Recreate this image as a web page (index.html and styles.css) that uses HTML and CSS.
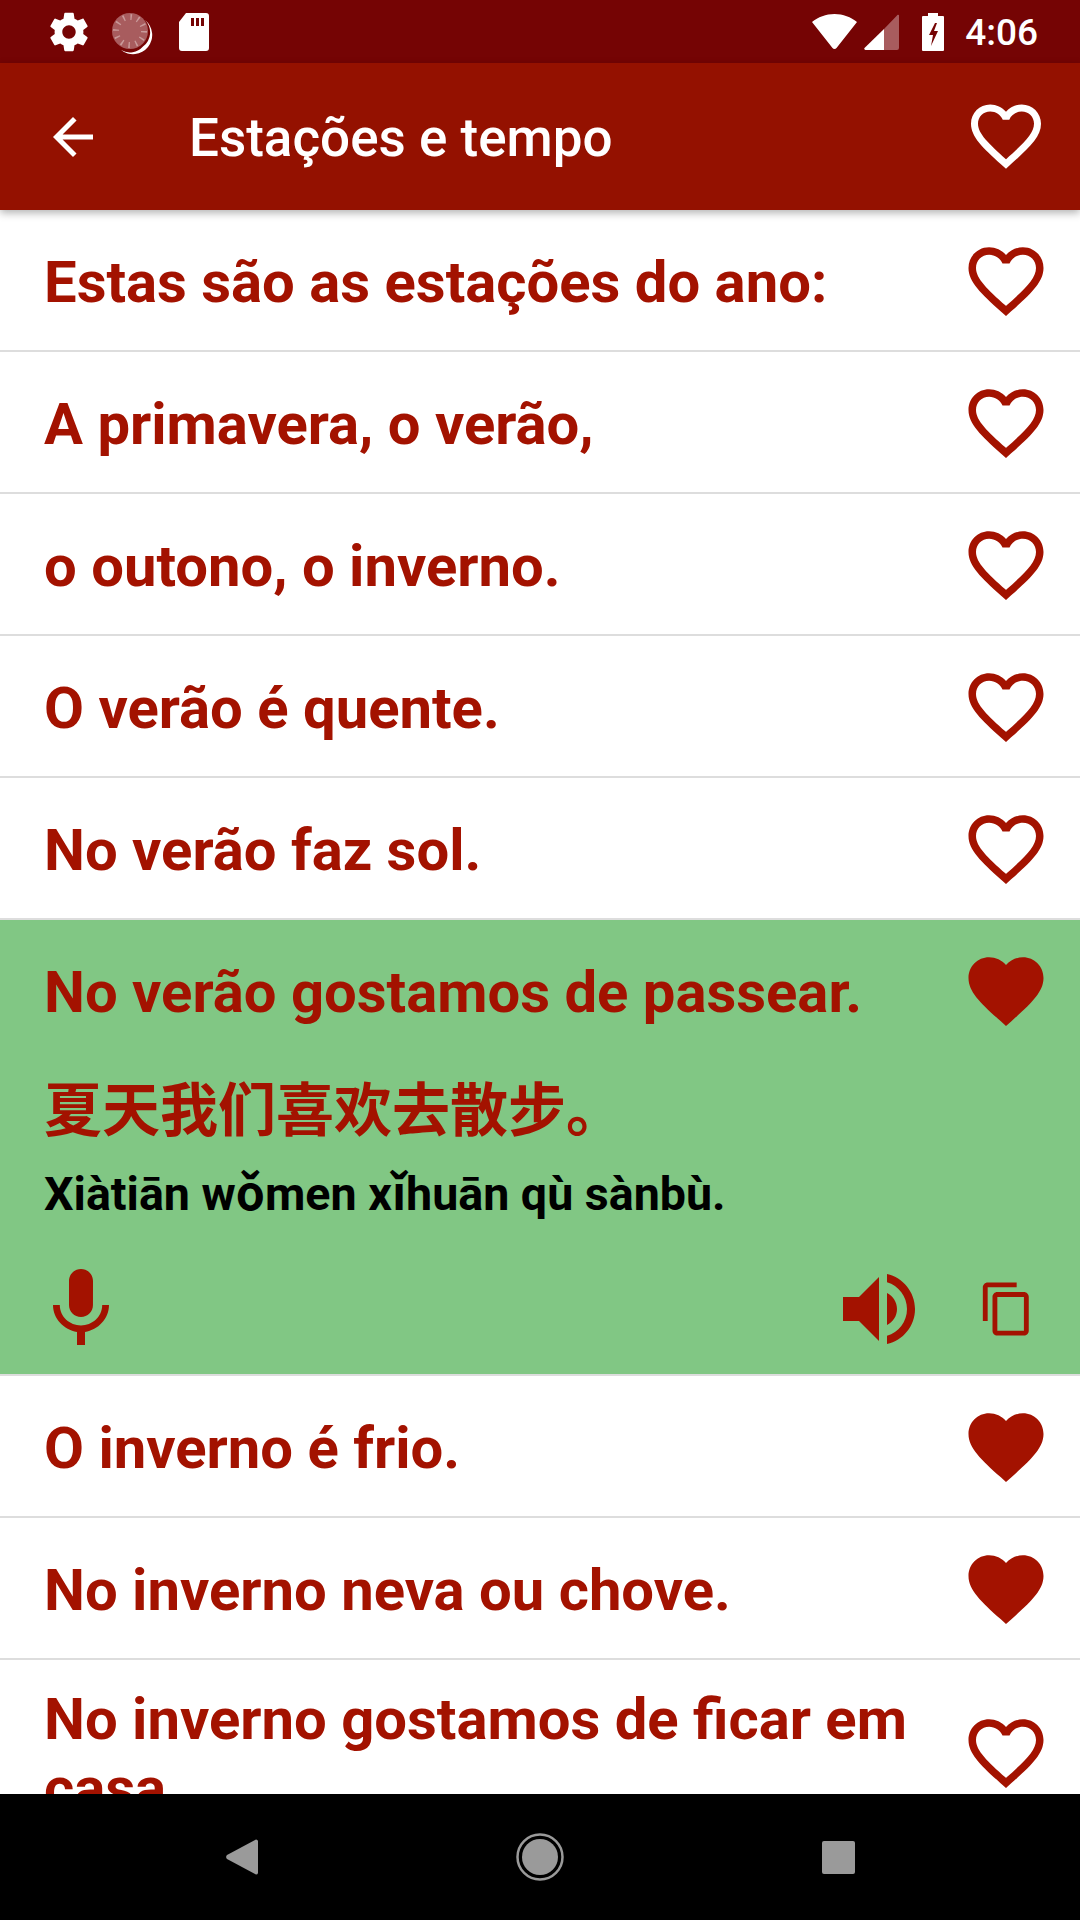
FILE: index.html
```html
<!DOCTYPE html>
<html lang="pt">
<head>
  <meta charset="UTF-8">
  <title>Estações e tempo</title>
  <link rel="stylesheet" href="styles.css">
</head>
<body>

  <svg class="defs" width="0" height="0">
    <symbol id="heart-line" viewBox="0 0 24 24"><path d="M16.5 3c-1.74 0-3.41.81-4.5 2.09C10.91 3.81 9.24 3 7.5 3 4.42 3 2 5.42 2 8.5c0 3.78 3.4 6.86 8.55 11.54L12 21.35l1.45-1.32C18.6 15.36 22 12.28 22 8.5 22 5.42 19.58 3 16.5 3zm-4.4 15.55l-.1.1-.1-.1C7.14 14.24 4 11.39 4 8.5 4 6.5 5.5 5 7.5 5c1.54 0 3.04.99 3.57 2.36h1.87C13.46 5.99 14.96 5 16.5 5c2 0 3.5 1.5 3.5 3.5 0 2.89-3.14 5.74-7.9 10.05z"/></symbol>
    <symbol id="heart-full" viewBox="0 0 24 24"><path d="M12 21.35l-1.45-1.32C5.4 15.36 2 12.28 2 8.5 2 5.42 4.42 3 7.5 3c1.74 0 3.41.81 4.5 2.09C13.09 3.81 14.76 3 16.5 3 19.58 3 22 5.42 22 8.5c0 3.78-3.4 6.86-8.55 11.54L12 21.35z"/></symbol>
  </svg>

  <div class="app">

    <div class="status-bar">
      <div class="status-left">
        <svg class="ic-status" viewBox="0 0 24 24"><path d="M19.43 12.98c.04-.32.07-.64.07-.98s-.03-.66-.07-.98l2.11-1.65c.19-.15.24-.42.12-.64l-2-3.46c-.12-.22-.39-.3-.61-.22l-2.49 1c-.52-.4-1.08-.73-1.69-.98l-.38-2.65C14.46 2.18 14.25 2 14 2h-4c-.25 0-.46.18-.49.42l-.38 2.65c-.61.25-1.17.59-1.69.98l-2.49-1c-.23-.09-.49 0-.61.22l-2 3.46c-.13.22-.07.49.12.64l2.11 1.65c-.04.32-.07.65-.07.98s.03.66.07.98l-2.11 1.65c-.19.15-.24.42-.12.64l2 3.46c.12.22.39.3.61.22l2.49-1c.52.4 1.08.73 1.69.98l.38 2.65c.03.24.24.42.49.42h4c.25 0 .46-.18.49-.42l.38-2.65c.61-.25 1.17-.59 1.69-.98l2.49 1c.23.09.49 0 .61-.22l2-3.46c.12-.22.07-.49-.12-.64l-2.11-1.65zM12 15.5c-1.93 0-3.5-1.57-3.5-3.5s1.57-3.5 3.5-3.5 3.5 1.57 3.5 3.5-1.57 3.5-3.5 3.5z"/></svg>
        <svg class="ic-status" viewBox="0 0 46 46">
          <circle class="dial" cx="22" cy="22" r="18"/>
          <circle class="dial-ticks" cx="22" cy="22" r="14"/>
          <path d="M37 11a19 19 0 0 1-24 30a17.500 17.500 0 0 0 22-3.500a17.500 17.500 0 0 0 2-26.500z"/>
        </svg>
        <svg class="ic-status" viewBox="0 0 46 46"><path fill-rule="evenodd" d="M16 4h20a3 3 0 0 1 3 3v32a3 3 0 0 1-3 3H12a3 3 0 0 1-3-3V13zM21 9v8h3V9zM26 9v8h3V9zM31 9v8h3V9z"/></svg>
      </div>
      <div class="status-right">
        <svg class="ic-wifi" viewBox="0 0 45 36"><path d="M22.500 0C14 0 6 3 0 8l20.500 26a2.500 2.500 0 0 0 4 0L45 8C39 3 31 0 22.500 0z"/></svg>
        <svg class="ic-signal" viewBox="0 0 35 36">
          <path class="dim" d="M20 15L33 1.500a1 1 0 0 1 2 .5v32a2 2 0 0 1-2 2H20z"/>
          <path d="M20 15V36H1.500a1.300 1.300 0 0 1-1-2z"/>
        </svg>
        <svg class="ic-battery" viewBox="0 0 22 38"><path fill-rule="evenodd" d="M6 0h10v3h5a1 1 0 0 1 1 1v33a1 1 0 0 1-1 1H1a1 1 0 0 1-1-1V4a1 1 0 0 1 1-1h5zM13 10L7 22h4l-2 11 7-15h-4l3-8z"/></svg>
        <span class="clock">4:06</span>
      </div>
    </div>

    <header class="toolbar">
      <svg class="ic-back" viewBox="0 0 24 24"><path d="M20 11H7.830l5.590-5.590L12 4l-8 8 8 8 1.410-1.410L7.830 13H20v-2z"/></svg>
      <h1 class="title">Estações e tempo</h1>
      <svg class="ic-fav"><use href="#heart-line"/></svg>
    </header>

    <ul class="list">
      <li class="row"><div class="row-head"><span class="phrase">Estas são as estações do ano:</span><svg class="ic-heart"><use href="#heart-line"/></svg></div></li>
      <li class="row"><div class="row-head"><span class="phrase">A primavera, o verão,</span><svg class="ic-heart"><use href="#heart-line"/></svg></div></li>
      <li class="row"><div class="row-head"><span class="phrase">o outono, o inverno.</span><svg class="ic-heart"><use href="#heart-line"/></svg></div></li>
      <li class="row"><div class="row-head"><span class="phrase">O verão é quente.</span><svg class="ic-heart"><use href="#heart-line"/></svg></div></li>
      <li class="row"><div class="row-head"><span class="phrase">No verão faz sol.</span><svg class="ic-heart"><use href="#heart-line"/></svg></div></li>
      <li class="row row-open">
        <div class="row-head"><span class="phrase">No verão gostamos de passear.</span><svg class="ic-heart"><use href="#heart-full"/></svg></div>
        <p class="hanzi">夏天我们喜欢去散步。</p>
        <p class="pinyin">Xiàtiān wǒmen xǐhuān qù sànbù.</p>
        <div class="actions">
          <svg class="ic-mic" viewBox="0 0 24 24"><path d="M12 14c1.660 0 2.990-1.340 2.990-3L15 5c0-1.660-1.340-3-3-3S9 3.340 9 5v6c0 1.660 1.340 3 3 3zm5.300-3c0 3-2.540 5.100-5.300 5.100S6.700 14 6.700 11H5c0 3.410 2.720 6.230 6 6.720V21h2v-3.280c3.280-.48 6-3.300 6-6.720h-1.700z"/></svg>
          <svg class="ic-speaker" viewBox="0 0 24 24"><path d="M3 9v6h4l5 5V4L7 9H3zm13.500 3c0-1.770-1.020-3.290-2.500-4.030v8.050c1.480-.73 2.500-2.250 2.500-4.020zM14 3.230v2.060c2.890.86 5 3.540 5 6.710s-2.110 5.850-5 6.710v2.060c4.010-.91 7-4.490 7-8.770s-2.990-7.860-7-8.770z"/></svg>
          <svg class="ic-copy" viewBox="0 0 24 24"><path d="M16 1H4c-1.100 0-2 .9-2 2v14h2V3h12V1zm3 4H8c-1.100 0-2 .9-2 2v14c0 1.100.9 2 2 2h11c1.100 0 2-.9 2-2V7c0-1.100-.9-2-2-2zm0 16H8V7h11v14z"/></svg>
        </div>
      </li>
      <li class="row"><div class="row-head"><span class="phrase">O inverno é frio.</span><svg class="ic-heart"><use href="#heart-full"/></svg></div></li>
      <li class="row"><div class="row-head"><span class="phrase">No inverno neva ou chove.</span><svg class="ic-heart"><use href="#heart-full"/></svg></div></li>
      <li class="row"><div class="row-head"><span class="phrase">No inverno gostamos de ficar em casa.</span><svg class="ic-heart"><use href="#heart-line"/></svg></div></li>
    </ul>

    <div class="nav-bar">
      <div class="nav-cell"><svg class="nav-back" viewBox="0 0 32 36"><path d="M30 .5a2 2 0 0 1 2 1.500v32a2 2 0 0 1-2 1.500L1 20a3 3 0 0 1 0-4z"/></svg></div>
      <div class="nav-cell"><svg class="nav-home" viewBox="0 0 48 48"><circle class="ring" cx="24" cy="24" r="22.500"/><circle cx="24" cy="24" r="18"/></svg></div>
      <div class="nav-cell"><div class="nav-recent"></div></div>
    </div>

  </div>

</body>
</html>
```

FILE: styles.css
```css
* { box-sizing: border-box; }

html, body {
  margin: 0;
  padding: 0;
}

body {
  background-color: #fff;
  font-family: 'Roboto', 'Noto Sans CJK SC', sans-serif;
}

.defs { display: block; height: 0; }

.app {
  display: flex;
  flex-direction: column;
  width: 1080px;
  height: 1920px;
  overflow: hidden;
}

/* status bar */
.status-bar {
  display: flex;
  flex: none;
  align-items: center;
  justify-content: space-between;
  height: 63px;
  padding: 0 42px 0 46px;
  background-color: #750404;
  fill: #fff;
}

.status-left { display: flex; align-items: center; gap: 16px; }
.status-right { display: flex; align-items: center; }

.ic-status { width: 46px; height: 46px; display: block; }
.dial { fill: #a85c5e; }
.dial-ticks {
  fill: none;
  stroke: #c99a9a;
  stroke-width: 6;
  stroke-dasharray: 1.5 5.830;
}

.ic-wifi { width: 45px; height: 36px; }
.ic-signal { width: 35px; height: 36px; margin-left: 7px; }
.ic-signal .dim { fill: #a85c5e; }
.ic-battery { width: 22px; height: 38px; margin-left: 23px; }

.clock {
  margin-left: 21px;
  padding-top: 2px;
  color: #fff;
  font-size: 37px;
  font-weight: 500;
}

/* toolbar */
.toolbar {
  position: relative;
  z-index: 2;
  display: flex;
  flex: none;
  align-items: center;
  height: 147px;
  padding: 0 32px 0 42px;
  background-color: #941100;
  box-shadow: 0 3px 8px rgba(0, 0, 0, 0.3);
  fill: #fff;
}

.ic-back { width: 60px; height: 60px; margin-left: 1px; }
.ic-fav { width: 84px; height: 84px; margin-left: auto; margin-bottom: 2px; }

.title {
  margin: 2px 0 0 86px;
  color: #fff;
  font-size: 53px;
  font-weight: 500;
}

/* list */
.list {
  flex: 1;
  min-height: 0;
  margin: 0;
  padding: 0;
  overflow: hidden;
  list-style: none;
  color: #a31200;
  fill: #a31200;
}

.row { border-bottom: 2px solid #ddd; }
.row-open { background-color: #81c784; }

.row-head {
  display: flex;
  align-items: center;
  justify-content: space-between;
  min-height: 140px;
  padding: 25px 29px 21px 44px;
}

.phrase {
  font-size: 58px;
  font-weight: 700;
  line-height: 69px;
}

.ic-heart { flex: none; width: 90px; height: 90px; margin: 0 0 3px 20px; }

.hanzi {
  margin: 4px 0 0 44px;
  font-family: 'Noto Sans CJK SC', sans-serif;
  font-size: 58px;
  font-weight: 700;
  line-height: 84px;
}

.pinyin {
  margin: 19px 0 0 44px;
  color: #000;
  font-size: 46.6px;
  font-weight: 700;
  line-height: 54px;
}

.actions {
  display: flex;
  align-items: center;
  height: 131px;
  margin-top: 22px;
  padding: 0 44px 0 33px;
}

.ic-mic { width: 96px; height: 96px; }
.ic-speaker { width: 96px; height: 96px; margin-left: auto; }
.ic-copy { width: 58px; height: 58px; margin-left: 51px; }

/* navigation bar */
.nav-bar {
  display: flex;
  flex: none;
  align-items: center;
  justify-content: center;
  height: 126px;
  background-color: #000;
  fill: #9a9a9a;
}

.nav-cell {
  display: flex;
  align-items: center;
  justify-content: center;
  width: 298px;
}

.nav-back { width: 32px; height: 36px; }
.nav-home { width: 48px; height: 48px; }
.nav-home .ring { fill: none; stroke: #9a9a9a; stroke-width: 2.500; }

.nav-recent {
  width: 33px;
  height: 33px;
  border-radius: 2px;
  background-color: #9a9a9a;
}
```
